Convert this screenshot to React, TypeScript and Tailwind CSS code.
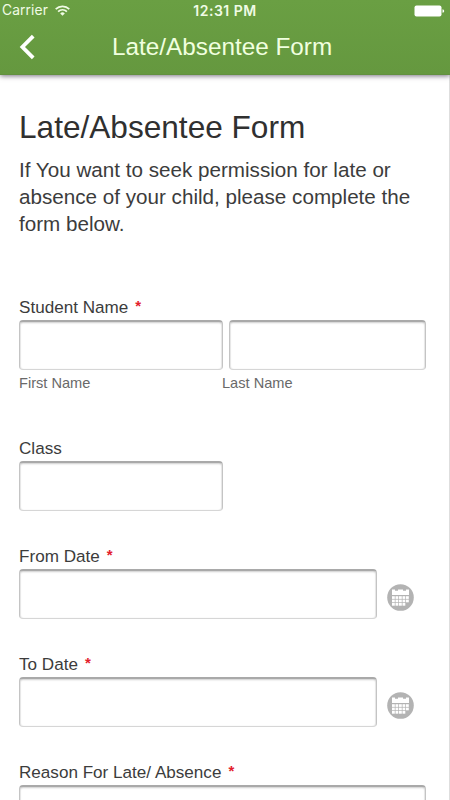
import React from 'react';

type LabelProps = {
  text: string;
  required?: boolean;
};

const Label = ({ text, required = false }: LabelProps) => (
  <div className="flex h-[25px] text-[17.1px] leading-[25px] whitespace-nowrap text-[#3c3c3c]">
    <span>{text}</span>
    {required && <span className="ml-[7px] text-[15px] leading-[22px] font-bold text-[#e3202c]">*</span>}
  </div>
);

const Field = ({ className, label }: { className: string; label: string }) => (
  <input
    aria-label={label}
    className={`block h-[50px] rounded-[4px] border border-t-2 border-[#c4c4c4] border-t-[#a9a9a9] border-b-[#d6d6d6] bg-white px-3 text-base shadow-[inset_0_2px_2px_-1px_#cfcfcf,inset_1px_0_1px_#e6e6e6,inset_-1px_0_1px_#e6e6e6] outline-none ${className}`}
  />
);

const WifiIcon = () => (
  <svg className="h-[11px] w-[15px]" viewBox="0 0 15 11" fill="none" stroke="#f0fbe5" strokeWidth="1.7">
    <path d="M0.7 4.1A9.6 9.6 0 0 1 14.3 4.1" />
    <path d="M3.1 6.6A6.2 6.2 0 0 1 11.9 6.6" />
    <path d="M7.5 10.8L5.2 8.4A3.3 3.3 0 0 1 9.8 8.4Z" fill="#f0fbe5" stroke="none" />
  </svg>
);

const BatteryIcon = () => (
  <svg className="h-3 w-[31px]" viewBox="0 0 31 12" fill="#fff">
    <rect x="0.5" y="0.5" width="27" height="11" rx="2" />
    <path d="M28.5 4.2C30.7 4.6 30.7 7.4 28.5 7.8Z" />
  </svg>
);

const CalendarIcon = () => (
  <svg className="h-[27px] w-[27px]" viewBox="0 0 27 27">
    <circle cx="13.5" cy="13.5" r="13.3" fill="#b3b3b3" />
    <g fill="#fff">
      <path d="M5 5.5H8V6.7H11V5.5H16V6.7H19V5.5H22V11H5Z" />
      {[12.2, 15.6, 19].map((y) =>
        [5, 8.5, 12, 15.5, 19].map((x) =>
          x === 19 && y === 19 ? null : <rect key={`${x}-${y}`} x={x} y={y} width="2.8" height="2.7" />
        )
      )}
    </g>
  </svg>
);

const DateField = ({ label }: { label: string }) => (
  <div className="mb-[33px]">
    <Label text={label} required />
    <div className="flex items-center">
      <Field label={label} className="w-[358px]" />
      <button type="button" aria-label={label} className="mt-[7px] ml-[10px]">
        <CalendarIcon />
      </button>
    </div>
  </div>
);

const App = () => {
  return (
    <div className="flex h-[800px] w-[450px] flex-col overflow-hidden bg-white font-['Liberation_Sans',Arial,sans-serif]">
      {/* Header */}
      <header className="z-10 h-[75px] shrink-0 border-b border-[#62903f] bg-linear-to-b from-[#6a9f43] to-[#65983f] shadow-[0_1px_5px_#77727f]">
        <div className="grid h-[19px] grid-cols-3 items-center font-[Inter,sans-serif] text-[#f0fbe5]">
          <div className="flex items-center gap-[7px] pl-[2px] text-[13.8px] tracking-[0.1px]">
            Carrier
            <WifiIcon />
          </div>
          <div className="text-center text-[14px] font-semibold tracking-[0.5px] whitespace-nowrap">12:31 PM</div>
          <div className="flex justify-end pr-[5px]">
            <BatteryIcon />
          </div>
        </div>
        <div className="flex h-[56px] items-center">
          <button type="button" aria-label="Back" className="ml-[19px] w-[94px]">
            <svg className="h-[26px] w-[17px]" viewBox="0 0 17 26" fill="none" stroke="#fff" strokeWidth="3.8">
              <path d="M14.2 2.2L3.4 13L14.2 23.8" />
            </svg>
          </button>
          <h1 className="-ml-[1px] text-[24.3px] leading-none whitespace-nowrap text-[#f0ffdf]">Late/Absentee Form</h1>
        </div>
      </header>

      {/* Form */}
      <main className="flex-1 border-r border-[#dedede] pt-[33px] pl-[19px]">
        <h2 className="h-[38px] text-[31.6px] leading-[38px] whitespace-nowrap text-[#303030]">Late/Absentee Form</h2>
        <p className="mt-[10px] w-[410px] text-[20.65px] leading-[27px] text-[#3c3c3c]">
          If You want to seek permission for late or
          <br />
          absence of your child, please complete the
          <br />
          form below.
        </p>

        <div className="mt-[58px] mb-[40px]">
          <Label text="Student Name" required />
          <div className="flex gap-[6px]">
            <Field label="First Name" className="w-[204px]" />
            <Field label="Last Name" className="w-[197px]" />
          </div>
          <div className="flex pt-[2px] pb-px text-[14.6px] leading-[23px] text-[#696969]">
            <span className="w-[203px]">First Name</span>
            <span>Last Name</span>
          </div>
        </div>

        <div className="mb-[33px]">
          <Label text="Class" />
          <Field label="Class" className="w-[204px]" />
        </div>

        <DateField label="From Date" />
        <DateField label="To Date" />

        <Label text="Reason For Late/ Absence" required />
        <Field label="Reason For Late/ Absence" className="w-[407px]" />
      </main>
    </div>
  );
};

export default App;
